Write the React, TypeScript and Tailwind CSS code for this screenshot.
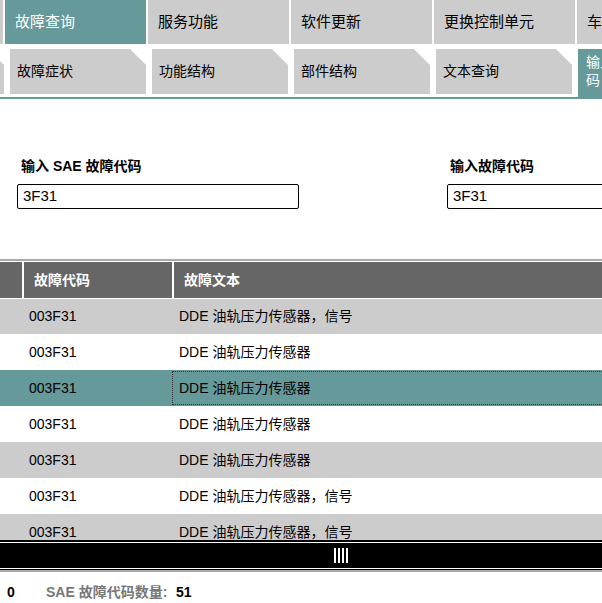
import React from "react";

const topTabs = ["", "故障查询", "服务功能", "软件更新", "更换控制单元", "车辆管理"];
const subTabs = ["", "故障症状", "功能结构", "部件结构", "文本查询"];

const rows = [
  { code: "003F31", text: "DDE 油轨压力传感器，信号", bg: "bg-[#cccccc]" },
  { code: "003F31", text: "DDE 油轨压力传感器", bg: "bg-white" },
  { code: "003F31", text: "DDE 油轨压力传感器", bg: "bg-[#669999]", sel: true },
  { code: "003F31", text: "DDE 油轨压力传感器", bg: "bg-white" },
  { code: "003F31", text: "DDE 油轨压力传感器", bg: "bg-[#cccccc]" },
  { code: "003F31", text: "DDE 油轨压力传感器，信号", bg: "bg-white" },
  { code: "003F31", text: "DDE 油轨压力传感器，信号", bg: "bg-[#cccccc]" },
];

export default function App() {
  return (
    <div className="w-[602px] h-[603px] overflow-hidden bg-white text-black font-[family-name:'Liberation_Sans','Noto_Sans_CJK_SC',sans-serif]">
      {/* top tabs */}
      <div className="flex gap-[2px] ml-[-138px] h-[44px]">
        {topTabs.map((t, i) => (
          <div
            key={i}
            className={`shrink-0 w-[141px] h-full flex items-center pl-[10px] text-[15px] whitespace-nowrap overflow-hidden ${
              i === 1 ? "bg-[#669999] text-white" : "bg-[#cccccc] text-black"
            }`}
          >
            {t}
          </div>
        ))}
      </div>

      {/* sub tabs */}
      <div className="mt-[5px] flex gap-[6px] ml-[-132px] h-[48px] items-start">
        {subTabs.map((t, i) => (
          <div
            key={i}
            className="shrink-0 w-[136px] h-[45px] bg-[#cccccc] flex items-center pl-[7px] text-[14px] whitespace-nowrap overflow-hidden [clip-path:polygon(0_0,calc(100%_-_16px)_0,100%_16px,100%_100%,0_100%)]"
          >
            {t}
          </div>
        ))}
        <div className="shrink-0 w-[136px] h-[48px] bg-[#669999] text-white text-[14px] leading-[18px] pl-[8px] pt-[4px] whitespace-nowrap">
          输入 SAE 故障代
          <br />码
        </div>
      </div>
      <div className="h-[2px] bg-[#669999]" />

      {/* form */}
      <div className="h-[160px] pt-[59px] pl-[17px] flex">
        <div className="w-[430px] shrink-0">
          <div className="pl-1 h-4 leading-4 text-[14px] font-bold">输入 SAE 故障代码</div>
          <div className="mt-[10px] w-[282px] h-[25px] border border-black rounded-[2px] pl-[5px] flex items-center text-[15px]">
            3F31
          </div>
        </div>
        <div className="w-[200px] shrink-0">
          <div className="pl-[3px] h-4 leading-4 text-[14px] font-bold">输入故障代码</div>
          <div className="mt-[10px] w-[200px] h-[25px] border border-black rounded-[2px] pl-[5px] flex items-center text-[15px]">
            3F31
          </div>
        </div>
      </div>

      {/* table */}
      <div className="h-[2px] bg-[#aaaaaa]" />
      <div className="h-[1px] bg-white" />
      <div className="grid grid-cols-[22px_150px_1fr] h-[36px] bg-[#666666] text-white text-[14px] font-bold">
        <div />
        <div className="border-l-2 border-white pl-[10px] flex items-center">故障代码</div>
        <div className="border-l-2 border-white pl-[10px] flex items-center">故障文本</div>
      </div>
      <div className="h-[242px] overflow-hidden">
        {rows.map((r, i) => (
          <div
            key={i}
            className={`grid grid-cols-[22px_150px_1fr] h-[36px] text-[14px] ${r.bg} ${
              i === 0 ? "border-t border-white" : ""
            }`}
          >
            <div />
            <div className="pl-[7px] flex items-center">{r.code}</div>
            <div
              className={`pl-[6px] flex items-center whitespace-nowrap my-[1px] border border-dotted ${
                r.sel ? "border-[#333333]" : "border-transparent"
              } border-r-0`}
            >
              {r.text}
            </div>
          </div>
        ))}
      </div>

      {/* scrollbar */}
      <div className="h-[2px] bg-black" />
      <div className="h-[1px] bg-white" />
      <div className="h-[25px] bg-black flex items-center justify-center">
        <div className="flex gap-[2px] h-[15px] ml-[80px]">
          <div className="w-[2px] h-full bg-white" />
          <div className="w-[2px] h-full bg-white" />
          <div className="w-[2px] h-full bg-white" />
          <div className="w-[2px] h-full bg-white" />
        </div>
      </div>
      <div className="h-[1px] bg-white" />
      <div className="h-[1px] bg-black" />
      <div className="h-[2px] bg-[#aaaaaa]" />

      {/* footer */}
      <div className="flex items-center h-[16px] mt-[12px] text-[14px] font-bold">
        <span className="pl-[7px] w-[46px]">0</span>
        <span className="text-[#777777] w-[130px]">SAE 故障代码数量:</span>
        <span>51</span>
      </div>
    </div>
  );
}
